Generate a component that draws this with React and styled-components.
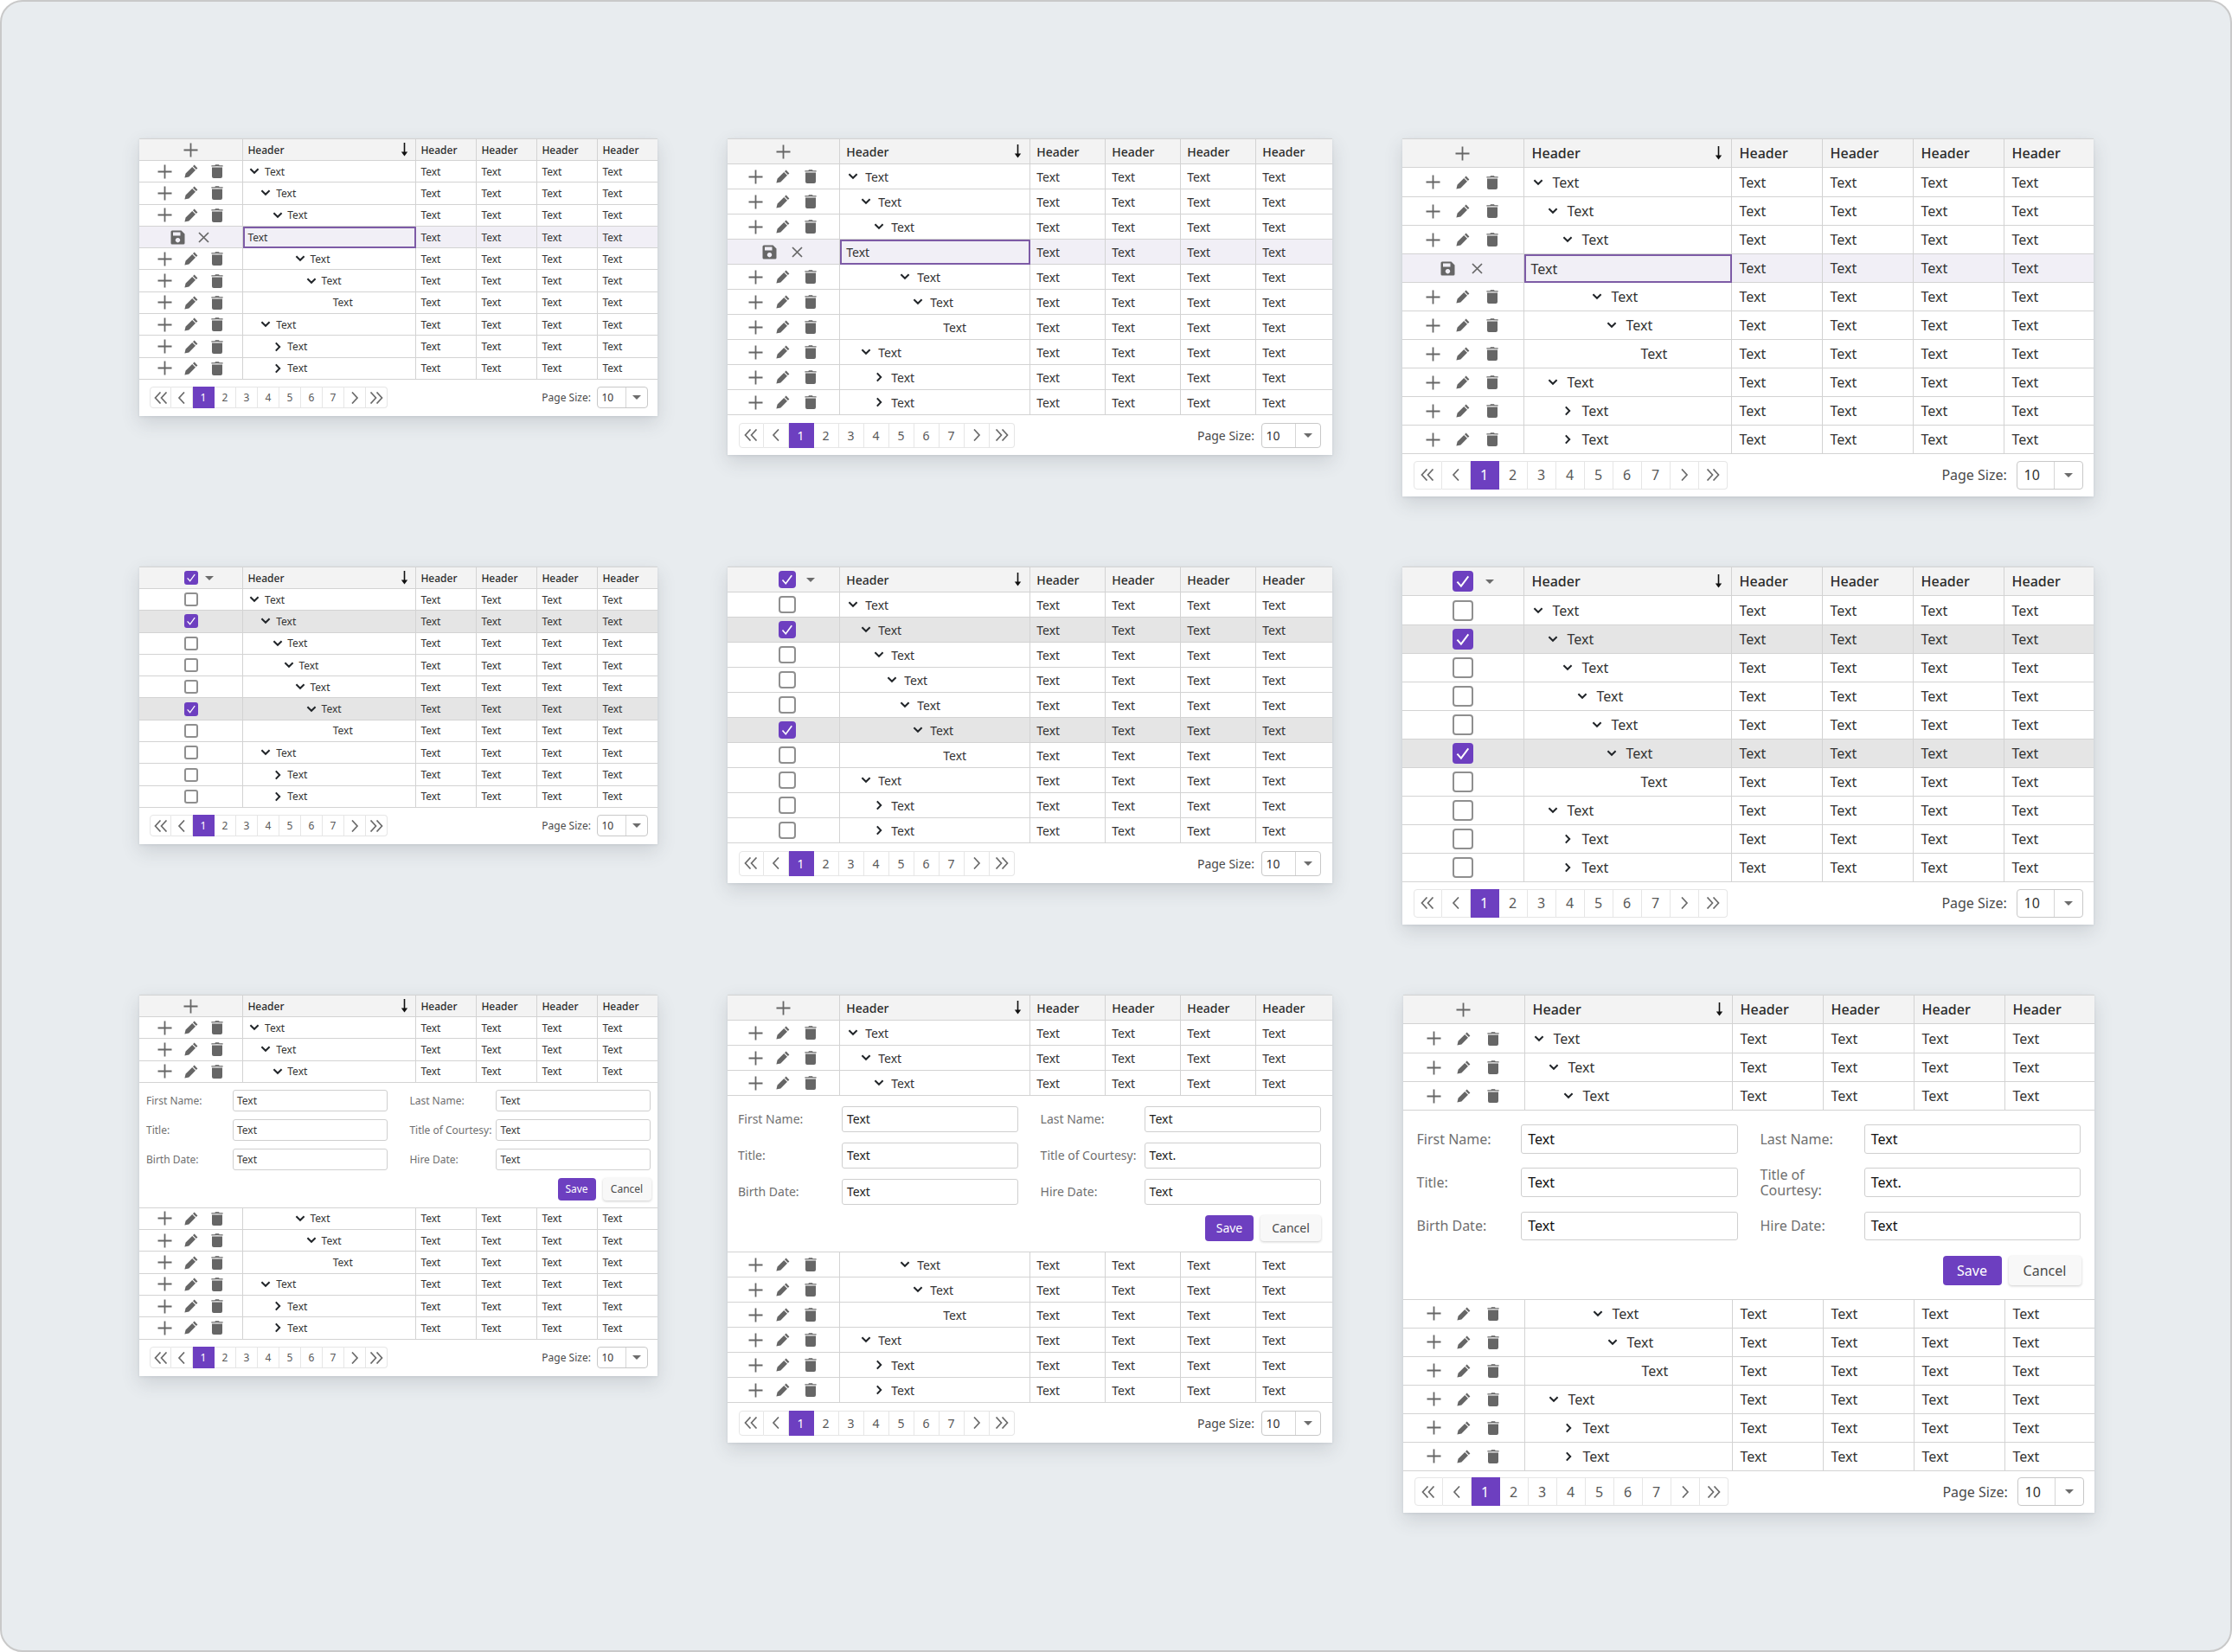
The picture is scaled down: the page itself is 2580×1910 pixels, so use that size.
import React from 'react';
import styled, { createGlobalStyle } from 'styled-components';

const SIZES = {
  sm: { w: 598.5, cols: '120.4px 200px 70px 70px 70px 1fr', head: 25, row: 25.3, firstRow: 25.3, font: 12, pad: 5, treePad: 5, step: 13.1, chevBox: 19.7, action: 30, check: 16, checkShift: 0, headCaret: 16, pagerH: 42, pagerPad: 12, pagerPadR: 11, btn: 25, sizeGap: 6.6, sel: 59, selCaret: 25, sortR: 8, formPad: '8px 7px 8.3px 8px', fCols: '100px 179px 25.4px 100px 179px', rowGap: 8.6, inputH: 25.4, inputPad: 4, inputColor: '#3a3a3a', labelLine: 17, saveW: 44, cancelW: 56, btnH: 26, actionsPad: 8.3 },
  md: { w: 699, cols: '130.8px 220px 87px 87px 87px 1fr', head: 29, row: 29, firstRow: 29, font: 14, pad: 7, treePad: 7, step: 15, chevBox: 22, action: 32, check: 20, checkShift: 9, headCaret: 27, pagerH: 46, pagerPad: 13, pagerPadR: 13, btn: 29, sizeGap: 7.6, sel: 69, selCaret: 29, sortR: 9, formPad: '12px 12.5px 12.3px 12.5px', fCols: '120px 204px 25.6px 120px 204px', rowGap: 12.5, inputH: 29.5, inputPad: 5, inputColor: '#1c1c1c', labelLine: 20, saveW: 56, cancelW: 70, btnH: 30, actionsPad: 12.3 },
  lg: { w: 799, cols: '141px 240px 105px 105px 105px 1fr', head: 33, row: 33, firstRow: 34, font: 16, pad: 9, treePad: 8, step: 17, chevBox: 25, action: 34, check: 24, checkShift: 0, headCaret: 26, pagerH: 48.7, pagerPad: 13, pagerPadR: 12, btn: 33, sizeGap: 10.7, sel: 77, selCaret: 33, sortR: 10, formPad: '16px 15px 16px 16px', fCols: '120.8px 250.5px 25.7px 120.3px 250.5px', rowGap: 15.5, inputH: 33.5, inputPad: 7, inputColor: '#111', labelLine: 18, saveW: 68, cancelW: 84, btnH: 34, actionsPad: 17.5 },
};
const PURPLE = '#6d3fc0';
const LINE = '#d3d3d3';
const s = (k) => (p) => SIZES[p.$s][k];

const Global = createGlobalStyle`
  html, body { margin: 0; padding: 0; background: #fff; }
  * { box-sizing: border-box; }
`;

const Page = styled.div`
  width: 2580px;
  height: 1910px;
  padding: 158px 0 0 159px;
  background: #e8ecef;
  border: 2px solid #c9c9c9;
  border-radius: 26px;
  font-family: 'Noto Sans', 'Liberation Sans', sans-serif;
  display: grid;
  grid-template-columns: 598.5px 699px 799px;
  grid-template-rows: 495px 495px auto;
  column-gap: 81px;
  align-items: start;
`;

const Table = styled.div`
  width: ${s('w')}px;
  margin-left: ${(p) => (p.$nudge ? 1 : 0)}px;
  background: #fff;
  border-top: 1px solid ${LINE};
  font-size: ${s('font')}px;
  color: #333;
  box-shadow: 0 8px 20px rgba(60, 70, 80, 0.16), 0 1px 3px rgba(60, 70, 80, 0.1);
`;

const Row = styled.div`
  display: grid;
  grid-template-columns: ${s('cols')};
  height: ${(p) => (p.$head ? SIZES[p.$s].head : p.$first ? SIZES[p.$s].firstRow : SIZES[p.$s].row)}px;
  border-bottom: 1px solid ${LINE};
  background: ${(p) => (p.$head ? '#f3f3f3' : p.$edit ? '#f1eff6' : p.$selected ? '#e5e5e5' : '#fff')};
`;

const Cell = styled.div`
  display: flex;
  align-items: center;
  min-width: 0;
  padding-left: ${(p) => (p.$tree ? SIZES[p.$s].treePad : SIZES[p.$s].pad)}px;
  border-right: 1px solid ${LINE};
  &:last-child { border-right: 0; }
`;

const HeaderCell = styled(Cell)`
  justify-content: space-between;
  font-weight: 500;
  color: #2b2b2b;
  padding-right: ${s('sortR')}px;
`;

const EditCell = styled(Cell)`
  outline: 2px solid #7d5ba6;
  outline-offset: -2px;
  margin-bottom: -1px;
  position: relative;
`;

const ActionCell = styled.div`
  display: flex;
  align-items: center;
  justify-content: center;
  border-right: 1px solid ${LINE};
  color: #666;
`;

const CheckCell = styled(ActionCell)`
  position: relative;
  padding-left: ${s('checkShift')}px;
`;

const ActionSlot = styled.span`
  display: flex;
  align-items: center;
  justify-content: center;
  width: ${s('action')}px;
`;

const Indent = styled.div`
  display: flex;
  align-items: center;
  margin-left: ${(p) => p.$level * SIZES[p.$s].step}px;
`;

const ChevSlot = styled.span`
  display: flex;
  align-items: center;
  width: ${s('chevBox')}px;
  color: #212529;
`;

const Check = styled.span`
  display: inline-flex;
  align-items: center;
  justify-content: center;
  width: ${s('check')}px;
  height: ${s('check')}px;
  border-radius: ${(p) => (p.$s === 'sm' ? 3 : 4)}px;
  border: ${(p) => (p.$on ? '0' : '2px solid #8f8f8f')};
  background: ${(p) => (p.$on ? PURPLE : '#fff')};
`;

const HeadCaret = styled.span`
  position: absolute;
  left: calc(50% + ${s('headCaret')}px);
  width: 0;
  height: 0;
  border-left: 5px solid transparent;
  border-right: 5px solid transparent;
  border-top: 5px solid #6c6c6c;
`;

const PagerBar = styled.div`
  display: flex;
  align-items: center;
  justify-content: space-between;
  height: ${s('pagerH')}px;
  padding: 0 ${s('pagerPadR')}px 0 ${s('pagerPad')}px;
  color: #4a4a4a;
`;

const PageList = styled.div`
  display: flex;
`;

const PageButton = styled.span`
  display: flex;
  align-items: center;
  justify-content: center;
  width: ${s('btn')}px;
  height: ${s('btn')}px;
  color: ${(p) => (p.$active ? '#fff' : '#585858')};
  background: ${(p) => (p.$active ? PURPLE : '#fff')};
  border: 1px solid ${(p) => (p.$active ? PURPLE : '#e6e6e6')};
  border-left-width: 0;
  &:first-child { border-left-width: 1px; border-radius: 4px 0 0 4px; }
  &:last-child { border-radius: 0 4px 4px 0; }
`;

const SizeGroup = styled.div`
  display: flex;
  align-items: center;
  gap: ${s('sizeGap')}px;
`;

const SizeSelect = styled.div`
  display: flex;
  align-items: center;
  width: ${s('sel')}px;
  height: ${s('btn')}px;
  border: 1px solid #c8c8c8;
  border-radius: 4px;
  color: #333;
`;

const SizeValue = styled.span`
  flex: 1;
  padding-left: ${(p) => (p.$s === 'lg' ? 8 : 5)}px;
`;

const SizeCaret = styled.span`
  display: flex;
  align-items: center;
  justify-content: center;
  width: ${s('selCaret')}px;
  height: 100%;
  border-left: 1px solid #d6d6d6;
  &::after {
    content: '';
    border-left: 5px solid transparent;
    border-right: 5px solid transparent;
    border-top: 5px solid #6c6c6c;
  }
`;

const FormPanel = styled.div`
  padding: ${s('formPad')};
  border-bottom: 1px solid ${LINE};
`;

const FormGrid = styled.div`
  display: grid;
  grid-template-columns: ${s('fCols')};
  row-gap: ${s('rowGap')}px;
  align-items: center;
`;

const FormLabel = styled.label`
  color: #6f6f6f;
  line-height: ${s('labelLine')}px;
  grid-column: ${(p) => (p.$second ? 4 : 1)};
`;

const FormInput = styled.div`
  display: flex;
  align-items: center;
  height: ${s('inputH')}px;
  padding-left: ${s('inputPad')}px;
  border: 1px solid #cfcfcf;
  border-radius: 3px;
  color: ${s('inputColor')};
  background: #fff;
  grid-column: ${(p) => (p.$second ? 5 : 2)};
`;

const FormActions = styled.div`
  display: flex;
  justify-content: flex-end;
  gap: 8px;
  margin-top: ${s('actionsPad')}px;
`;

const SaveButton = styled.span`
  display: flex;
  align-items: center;
  justify-content: center;
  width: ${s('saveW')}px;
  height: ${s('btnH')}px;
  border-radius: 4px;
  background: ${PURPLE};
  color: #fff;
`;

const CancelButton = styled.span`
  display: flex;
  align-items: center;
  justify-content: center;
  width: ${s('cancelW')}px;
  height: ${s('btnH')}px;
  border-radius: 4px;
  background: #f8f8f8;
  color: #4a4a4a;
  box-shadow: 0 1px 3px rgba(0, 0, 0, 0.2);
`;

const Plus = () => (
  <svg width="17" height="17" viewBox="0 0 17 17"><path d="M8.5 0.5v16M0.5 8.5h16" stroke="currentColor" strokeWidth="1.8" fill="none" /></svg>
);
const Pencil = () => (
  <svg width="16" height="16" viewBox="0 0 16 16"><path fill="currentColor" d="M11.6 0.6l3.8 3.8-1.6 1.6-3.8-3.8zM9.2 3l3.8 3.8-7.6 7.6L0.4 15.6l1.2-5z" /></svg>
);
const Trash = () => (
  <svg width="14" height="16" viewBox="0 0 14 16"><path fill="currentColor" d="M5 0.2h4l.7 1H13.6v1.4q-6.6-.8-13.2 0V1.2h3.9zM1 3.6h12v10.4a2 2 0 0 1-2 2H3a2 2 0 0 1-2-2z" /></svg>
);
const Save = () => (
  <svg width="17" height="17" viewBox="0 0 17 17"><path fill="currentColor" fillRule="evenodd" d="M2 .5h10.5l4 4V15a1.5 1.5 0 0 1-1.5 1.5H2A1.5 1.5 0 0 1 .5 15V2A1.5 1.5 0 0 1 2 .5zM3 2.5v4h8.5v-4zM8.5 9a2.7 2.7 0 1 0 .01 0z" /></svg>
);
const Close = () => (
  <svg width="13" height="13" viewBox="0 0 13 13"><path d="M1 1l11 11M12 1L1 12" stroke="currentColor" strokeWidth="1.7" fill="none" /></svg>
);
const ChevDown = () => (
  <svg width="16" height="8" viewBox="0 0 16 8"><path d="M3.4 1.2l4.6 4.6 4.6-4.6" stroke="currentColor" strokeWidth="2" fill="none" /></svg>
);
const ChevRight = () => (
  <svg width="16" height="12" viewBox="0 0 16 12"><path d="M5.8 1.4l4.4 4.6-4.4 4.6" stroke="currentColor" strokeWidth="2" fill="none" /></svg>
);
const SortArrow = () => (
  <svg width="9" height="16" viewBox="0 0 9 16"><path d="M4.5 0v11" stroke="#111" strokeWidth="1.6" /><path d="M0.8 10.6h7.4l-3.7 4.8z" fill="#111" /></svg>
);
const CheckMark = ({ size }) => (
  <svg width={size} height={size} viewBox="0 0 16 16"><path d="M3.6 8.4l3 3.4 5.6-7.6" stroke="#fff" strokeWidth="1.3" fill="none" /></svg>
);
const PagerIcon = ({ d }) => (
  <svg width="16" height="14" viewBox="0 0 16 14"><path d={d} stroke="#6a6a6a" strokeWidth="1.7" fill="none" /></svg>
);

const FIRST = 'M7.5 0.5L1.5 7l6 6.5M14.5 0.5L8.5 7l6 6.5';
const PREV = 'M11 0.5L5 7l6 6.5';
const NEXT = 'M5 0.5l6 6.5-6 6.5';
const LAST = 'M1.5 0.5L7.5 7l-6 6.5M8.5 0.5L14.5 7l-6 6.5';

const TREE = [
  [0, 'down'], [1, 'down'], [2, 'down'], [3, 'down'], [4, 'down'],
  [5, 'down'], [6, null], [1, 'down'], [2, 'right'], [2, 'right'],
];
const OTHER = ['Text', 'Text', 'Text', 'Text'];

const Head = ({ size, selection }) => (
  <Row $s={size} $head>
    {selection ? (
      <CheckCell $s={size}>
        <Check $s={size} $on><CheckMark size={SIZES[size].check} /></Check>
        <HeadCaret $s={size} />
      </CheckCell>
    ) : (
      <ActionCell><Plus /></ActionCell>
    )}
    <HeaderCell $s={size}>Header<SortArrow /></HeaderCell>
    {OTHER.map((_, i) => <HeaderCell key={i} $s={size}>Header</HeaderCell>)}
  </Row>
);

const TreeText = ({ size, level, chev }) => (
  <Indent $s={size} $level={level}>
    <ChevSlot $s={size}>
      {chev === 'down' && <ChevDown />}
      {chev === 'right' && <ChevRight />}
    </ChevSlot>
    Text
  </Indent>
);

const DataRow = ({ size, level, chev, mode, selected, first }) => (
  <Row $s={size} $selected={selected} $first={first}>
    {mode === 'select' ? (
      <CheckCell $s={size}>
        <Check $s={size} $on={selected}>{selected && <CheckMark size={SIZES[size].check} />}</Check>
      </CheckCell>
    ) : (
      <ActionCell>
        <ActionSlot $s={size}><Plus /></ActionSlot>
        <ActionSlot $s={size}><Pencil /></ActionSlot>
        <ActionSlot $s={size}><Trash /></ActionSlot>
      </ActionCell>
    )}
    <Cell $s={size} $tree><TreeText size={size} level={level} chev={chev} /></Cell>
    {OTHER.map((t, i) => <Cell key={i} $s={size}>{t}</Cell>)}
  </Row>
);

const EditRow = ({ size }) => (
  <Row $s={size} $edit>
    <ActionCell>
      <ActionSlot $s={size}><Save /></ActionSlot>
      <ActionSlot $s={size}><Close /></ActionSlot>
    </ActionCell>
    <EditCell $s={size} $tree>Text</EditCell>
    {OTHER.map((t, i) => <Cell key={i} $s={size}>{t}</Cell>)}
  </Row>
);

const FormRow = ({ size }) => {
  const courtesy = size === 'sm' ? 'Text' : 'Text.';
  const fields = [
    ['First Name:', 'Text', 'Last Name:', 'Text'],
    ['Title:', 'Text', 'Title of Courtesy:', courtesy],
    ['Birth Date:', 'Text', 'Hire Date:', 'Text'],
  ];
  return (
    <FormPanel $s={size}>
      <FormGrid $s={size}>
        {fields.map(([a, av, b, bv]) => (
          <React.Fragment key={a}>
            <FormLabel $s={size}>{a}</FormLabel>
            <FormInput $s={size}>{av}</FormInput>
            <FormLabel $s={size} $second>{b}</FormLabel>
            <FormInput $s={size} $second>{bv}</FormInput>
          </React.Fragment>
        ))}
      </FormGrid>
      <FormActions $s={size}>
        <SaveButton $s={size}>Save</SaveButton>
        <CancelButton $s={size}>Cancel</CancelButton>
      </FormActions>
    </FormPanel>
  );
};

const Pager = ({ size }) => (
  <PagerBar $s={size}>
    <PageList>
      <PageButton $s={size}><PagerIcon d={FIRST} /></PageButton>
      <PageButton $s={size}><PagerIcon d={PREV} /></PageButton>
      {[1, 2, 3, 4, 5, 6, 7].map((n) => (
        <PageButton key={n} $s={size} $active={n === 1}>{n}</PageButton>
      ))}
      <PageButton $s={size}><PagerIcon d={NEXT} /></PageButton>
      <PageButton $s={size}><PagerIcon d={LAST} /></PageButton>
    </PageList>
    <SizeGroup $s={size}>
      Page Size:
      <SizeSelect $s={size}>
        <SizeValue $s={size}>10</SizeValue>
        <SizeCaret $s={size} />
      </SizeSelect>
    </SizeGroup>
  </PagerBar>
);

const TreeTable = ({ size, variant }) => (
  <Table $s={size} $nudge={size === 'lg' && variant === 'form'}>
    <Head size={size} selection={variant === 'select'} />
    {TREE.map(([level, chev], i) => {
      if (variant === 'inline' && i === 3) return <EditRow key={i} size={size} />;
      if (variant === 'form' && i === 3) return <FormRow key={i} size={size} />;
      return (
        <DataRow
          key={i}
          size={size}
          level={level}
          chev={chev}
          first={i === 0}
          mode={variant === 'select' ? 'select' : 'actions'}
          selected={variant === 'select' && (i === 1 || i === 5)}
        />
      );
    })}
    <Pager size={size} />
  </Table>
);

export default function App() {
  return (
    <Page>
      <Global />
      {['inline', 'select', 'form'].map((variant) =>
        ['sm', 'md', 'lg'].map((size) => (
          <TreeTable key={variant + size} size={size} variant={variant} />
        ))
      )}
    </Page>
  );
}
